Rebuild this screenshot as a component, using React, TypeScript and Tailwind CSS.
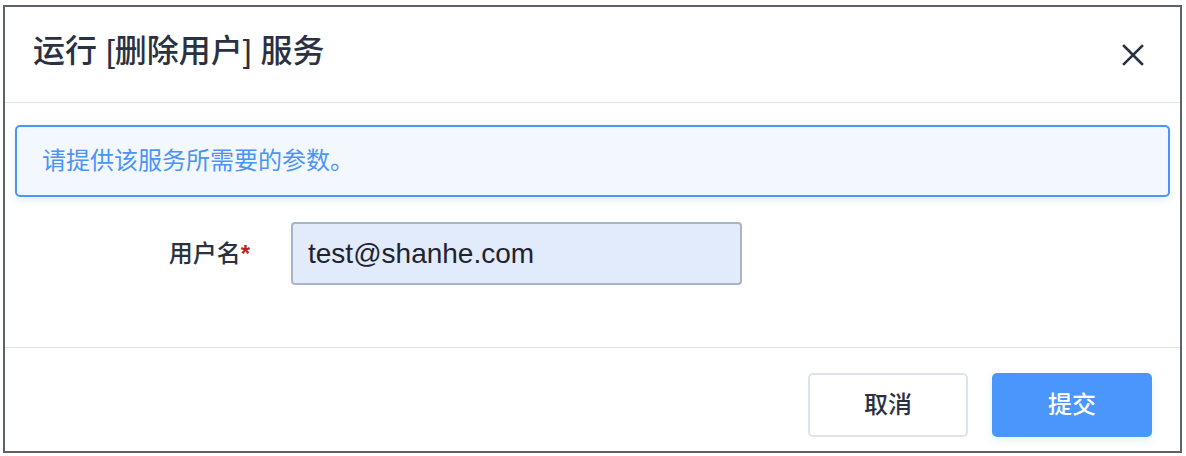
const font = { fontFamily: '"Liberation Sans", "Noto Sans CJK SC", sans-serif' };

export default function App() {
  return (
    <div className="w-[1186px] h-[456px] bg-white pl-[3px] pt-[5px]" style={font}>
      <div className="w-[1179px] h-[448px] border-2 border-[#5d6169] bg-white flex flex-col">
        {/* Header */}
        <div className="h-[96px] flex items-start justify-between border-b border-[#dee5ec] pl-[28px] pr-[36px]">
          <h1 className="mt-[24px] text-[32px] leading-[40px] font-medium text-[#2a3142]">
            运行 [删除用户] 服务
          </h1>
          <button className="mt-[37px] text-[#2a3142]">
            <svg width="22" height="22" viewBox="0 0 22 22" fill="none" stroke="currentColor" strokeWidth="2.6" strokeLinecap="square">
              <path d="M2 2 L20 20 M20 2 L2 20" />
            </svg>
          </button>
        </div>

        {/* Body */}
        <div className="h-[244px] px-[10px] pt-[22px]">
          <div className="h-[72px] flex items-center rounded-[5px] border-2 border-[#4a96fa] bg-[#f3f8ff] px-[25px] shadow-[0_3px_8px_rgba(60,90,140,0.12)]">
            <p className="text-[24px] text-[#4b94f3]">请提供该服务所需要的参数。</p>
          </div>

          <div className="mt-[25px] flex items-center">
            <label className="w-[276px] pr-[41px] text-right text-[24px] font-medium text-[#2a3142]">
              用户名<span className="font-bold text-[#b3261e]">*</span>
            </label>
            <div className="w-[451px] h-[63px] flex items-center rounded-[4px] border-2 border-[#a8b5c7] bg-[#e1ebfc] px-[15px]">
              <span className="text-[28px] text-[#1f2330]">test@shanhe.com</span>
            </div>
          </div>
        </div>

        {/* Footer */}
        <div className="flex-1 border-t border-[#dee5ec] flex justify-end items-start gap-[24px] pr-[28px] pt-[25px]">
          <button className="w-[160px] h-[64px] rounded-[5px] border-2 border-[#dde3ea] bg-white text-[24px] font-medium text-[#2a3142]">
            取消
          </button>
          <button className="w-[160px] h-[64px] rounded-[5px] bg-[#4a96fc] text-[24px] font-medium text-white shadow-[0_3px_10px_rgba(80,180,120,0.15)]">
            提交
          </button>
        </div>
      </div>
    </div>
  );
}
